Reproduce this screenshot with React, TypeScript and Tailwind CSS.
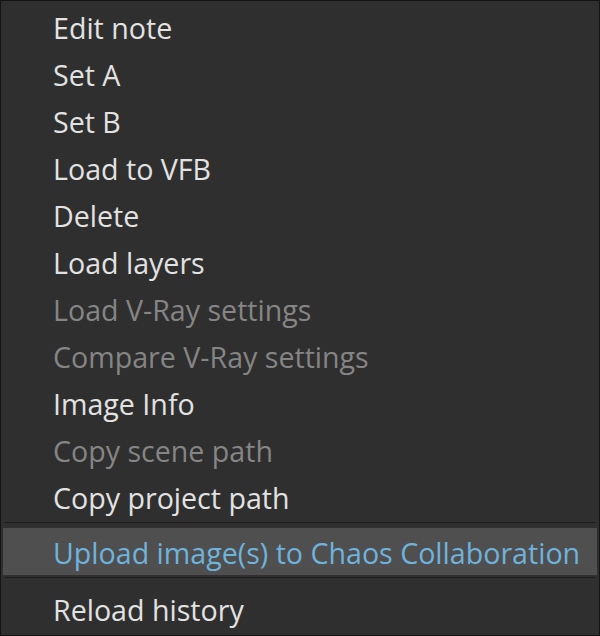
import React from 'react';

type Item = { label: string; disabled?: boolean };

const topItems: Item[] = [
  { label: 'Edit note' },
  { label: 'Set A' },
  { label: 'Set B' },
  { label: 'Load to VFB' },
  { label: 'Delete' },
  { label: 'Load layers' },
  { label: 'Load V-Ray settings', disabled: true },
  { label: 'Compare V-Ray settings', disabled: true },
  { label: 'Image Info' },
  { label: 'Copy scene path', disabled: true },
  { label: 'Copy project path' },
];

const font = { fontFamily: '"Open Sans", "Noto Sans", sans-serif' };

function Row({ item }: { item: Item }) {
  return (
    <div
      className={`h-[47px] flex items-center pl-[52px] pt-[2px] text-[28.6px] leading-none ${
        item.disabled ? 'text-[#858585]' : 'text-[#e2e2e2]'
      }`}
    >
      {item.label}
    </div>
  );
}

export default function App() {
  return (
    <div
      className="w-[600px] h-[636px] bg-[#2f2f2f] border border-[#141414] flex flex-col pt-[3px]"
      style={font}
    >
      {/* Regular entries */}
      {topItems.map((item) => (
        <Row key={item.label} item={item} />
      ))}

      <div className="mt-px h-px bg-[#1c1c1c] mx-[4px]" />

      {/* Hovered entry */}
      <div className="mt-[5px] mx-[2px] h-[47px] bg-[#4f4f4f] flex items-center pl-[50px] pt-[4px] text-[28.6px] leading-none text-[#6fb3dc]">
        Upload image(s) to Chaos Collaboration
      </div>

      <div className="mt-[2px] h-px bg-[#1c1c1c] mx-[4px]" />

      <div className="mt-[8px]">
        <Row item={{ label: 'Reload history' }} />
      </div>
    </div>
  );
}
